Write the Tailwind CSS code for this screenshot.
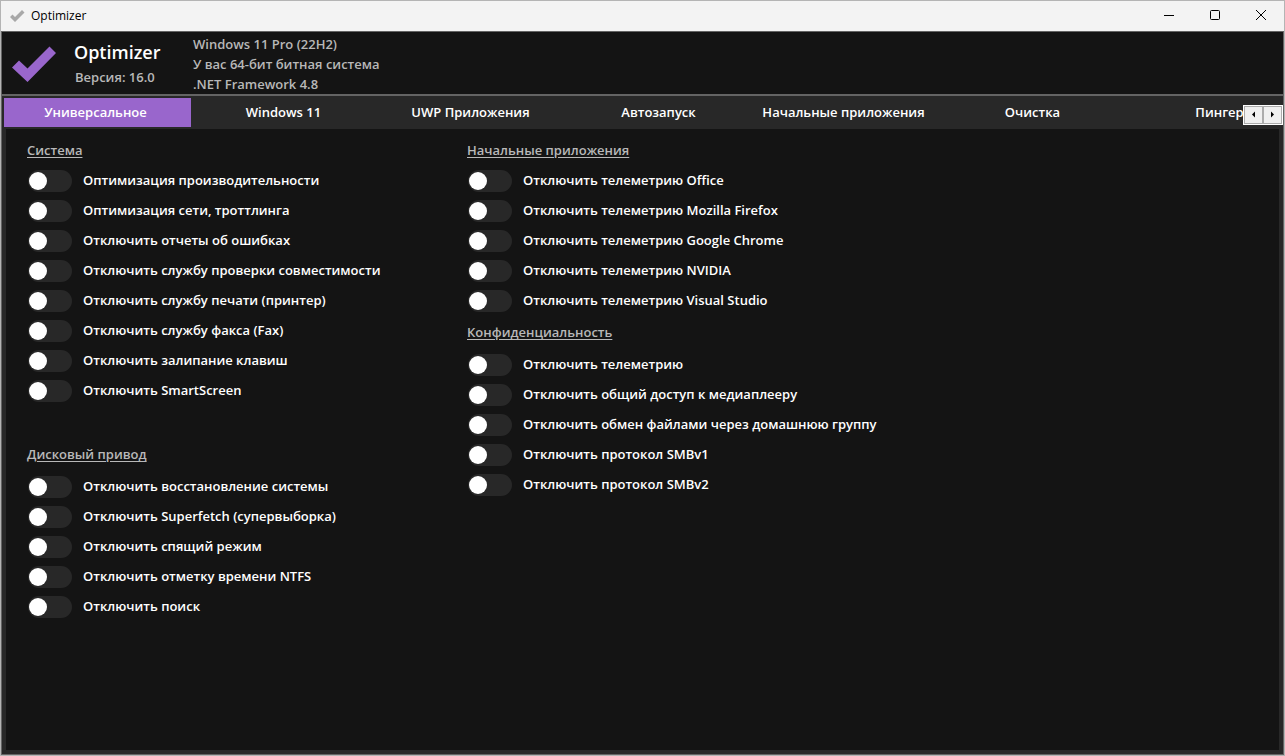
<!DOCTYPE html>
<html lang="ru">
<head>
<meta charset="utf-8">
<meta name="viewport" content="width=device-width, initial-scale=1">
<title>Optimizer</title>
<script src="https://cdn.jsdelivr.net/npm/@tailwindcss/browser@4"></script>
</head>
<body class="min-h-screen flex flex-col border border-[#b4b4b4] bg-[#141414] font-['Open_Sans','Noto_Sans',sans-serif] text-[13px] leading-5 font-semibold text-white">
  <header class="flex h-[30px] items-center bg-[#f3f3f3] pl-2 text-black">
    <svg class="mr-1.5 h-4 w-4" viewBox="0 0 16 16" aria-hidden="true"><path d="M1 9 3.500 6.500l2.500 2.500L13 2l2.500 2.500L6 14z" fill="#a8a8a8"/></svg>
    <span class="grow text-[12px] font-normal">Optimizer</span>
    <button type="button" aria-label="Свернуть" class="flex h-full w-[46px] items-center justify-center"><svg width="10" height="10" viewBox="0 0 10 10"><path d="M0 4.500h10" stroke="#000"/></svg></button>
    <button type="button" aria-label="Развернуть" class="flex h-full w-[46px] items-center justify-center pb-0.5"><svg width="10" height="10" viewBox="0 0 10 10"><rect x=".5" y=".5" width="9" height="9" rx="1" fill="none" stroke="#000"/></svg></button>
    <button type="button" aria-label="Закрыть" class="flex h-full w-[46px] items-center justify-center pb-0.5"><svg width="10" height="10" viewBox="0 0 10 10"><path d="M0 0l10 10M10 0L0 10" stroke="#000"/></svg></button>
  </header>

  <div class="flex grow flex-col border border-[#646464]">
    <section class="flex h-[62px] pl-2.5 text-[#b8b8b8]">
      <svg class="mt-3.5 h-9 w-11 shrink-0" viewBox="0 0 44 36" aria-hidden="true"><path d="M0 21.500 7 14.500l8.500 8L37.500 0.500 44 7 15.500 36z" fill="#9966cc"/></svg>
      <div class="ml-[18px] w-[119px] pt-2">
        <h1 class="text-[18px] leading-6 text-white">Optimizer</h1>
        <p class="pt-[3px] pl-px">Версия: 16.0</p>
      </div>
      <div class="pt-0.5">
        <p>Windows 11 Pro (22H2)</p>
        <p>У вас 64-бит битная система</p>
        <p>.NET Framework 4.8</p>
      </div>
    </section>

    <div class="relative border-t-2 border-[#646464] bg-[#282828] pt-0.5 pb-0.5 pl-0.5">
      <div role="tablist" class="flex overflow-hidden">
        <button type="button" role="tab" aria-selected="true" class="h-[29px] w-[187px] shrink-0 bg-[#9966cc] pr-1 pb-0.5">Универсальное</button>
        <button type="button" role="tab" class="h-[29px] w-[187px] shrink-0 pr-0.5 pb-0.5">Windows 11</button>
        <button type="button" role="tab" class="h-[29px] w-[187px] shrink-0 pr-0.5 pb-0.5">UWP Приложения</button>
        <button type="button" role="tab" class="h-[29px] w-[187px] shrink-0 pb-0.5">Автозапуск</button>
        <button type="button" role="tab" class="h-[29px] w-[187px] shrink-0 pr-1 pb-0.5">Начальные приложения</button>
        <button type="button" role="tab" class="h-[29px] w-[187px] shrink-0 pb-0.5">Очистка</button>
        <button type="button" role="tab" class="h-[29px] w-[187px] shrink-0 pb-0.5">Пингер</button>
      </div>
      <div class="absolute right-0 bottom-1 flex h-5 w-10 border border-white bg-[#f0f0f0]">
        <button type="button" aria-label="Назад" class="flex flex-1 items-center justify-center border border-[#acacac] pb-0.5"><svg width="5" height="7" viewBox="0 0 5 7"><path d="M4 0.500v6L1 3.500z"/></svg></button>
        <button type="button" aria-label="Вперёд" class="flex flex-1 items-center justify-center border border-[#acacac] pb-0.5"><svg width="5" height="7" viewBox="0 0 5 7"><path d="M1 0.500v6l3-3z"/></svg></button>
      </div>
    </div>

    <main class="flex grow border-x-4 border-b-4 border-[#282828] pt-[11px] pl-[21px]">
      <div class="w-[440px] shrink-0">
        <h2 class="mb-1.5 text-[#b8b8b8] underline underline-offset-2">Система</h2>
        <ul class="mb-[38px]" id="system"></ul>
        <h2 class="mb-2 text-[#b8b8b8] underline underline-offset-2">Дисковый привод</h2>
        <ul id="disk"></ul>
      </div>
      <div class="grow">
        <h2 class="mb-1.5 text-[#b8b8b8] underline underline-offset-2">Начальные приложения</h2>
        <ul class="mb-1.5" id="apps"></ul>
        <h2 class="mb-2 text-[#b8b8b8] underline underline-offset-2">Конфиденциальность</h2>
        <ul id="privacy"></ul>
      </div>
    </main>
  </div>

  <template id="row">
    <li class="flex h-[30px] items-center pl-px">
      <label class="flex items-center gap-[11px]">
        <input type="checkbox" role="switch" class="flex h-[22px] w-11 shrink-0 appearance-none items-center rounded-full bg-[#282828] pl-px before:block before:size-[18px] before:rounded-full before:bg-white before:content-['']">
        <span class="pb-0.5"></span>
      </label>
    </li>
  </template>
  <script>
    const options = {
      system: ["Оптимизация производительности", "Оптимизация сети, троттлинга", "Отключить отчеты об ошибках", "Отключить службу проверки совместимости", "Отключить службу печати (принтер)", "Отключить службу факса (Fax)", "Отключить залипание клавиш", "Отключить SmartScreen"],
      disk: ["Отключить восстановление системы", "Отключить Superfetch (супервыборка)", "Отключить спящий режим", "Отключить отметку времени NTFS", "Отключить поиск"],
      apps: ["Отключить телеметрию Office", "Отключить телеметрию Mozilla Firefox", "Отключить телеметрию Google Chrome", "Отключить телеметрию NVIDIA", "Отключить телеметрию Visual Studio"],
      privacy: ["Отключить телеметрию", "Отключить общий доступ к медиаплееру", "Отключить обмен файлами через домашнюю группу", "Отключить протокол SMBv1", "Отключить протокол SMBv2"]
    };
    const row = document.getElementById("row");
    for (const [id, labels] of Object.entries(options)) {
      for (const text of labels) {
        const item = row.content.cloneNode(true);
        item.querySelector("span").textContent = text;
        document.getElementById(id).append(item);
      }
    }
  </script>
</body>
</html>
